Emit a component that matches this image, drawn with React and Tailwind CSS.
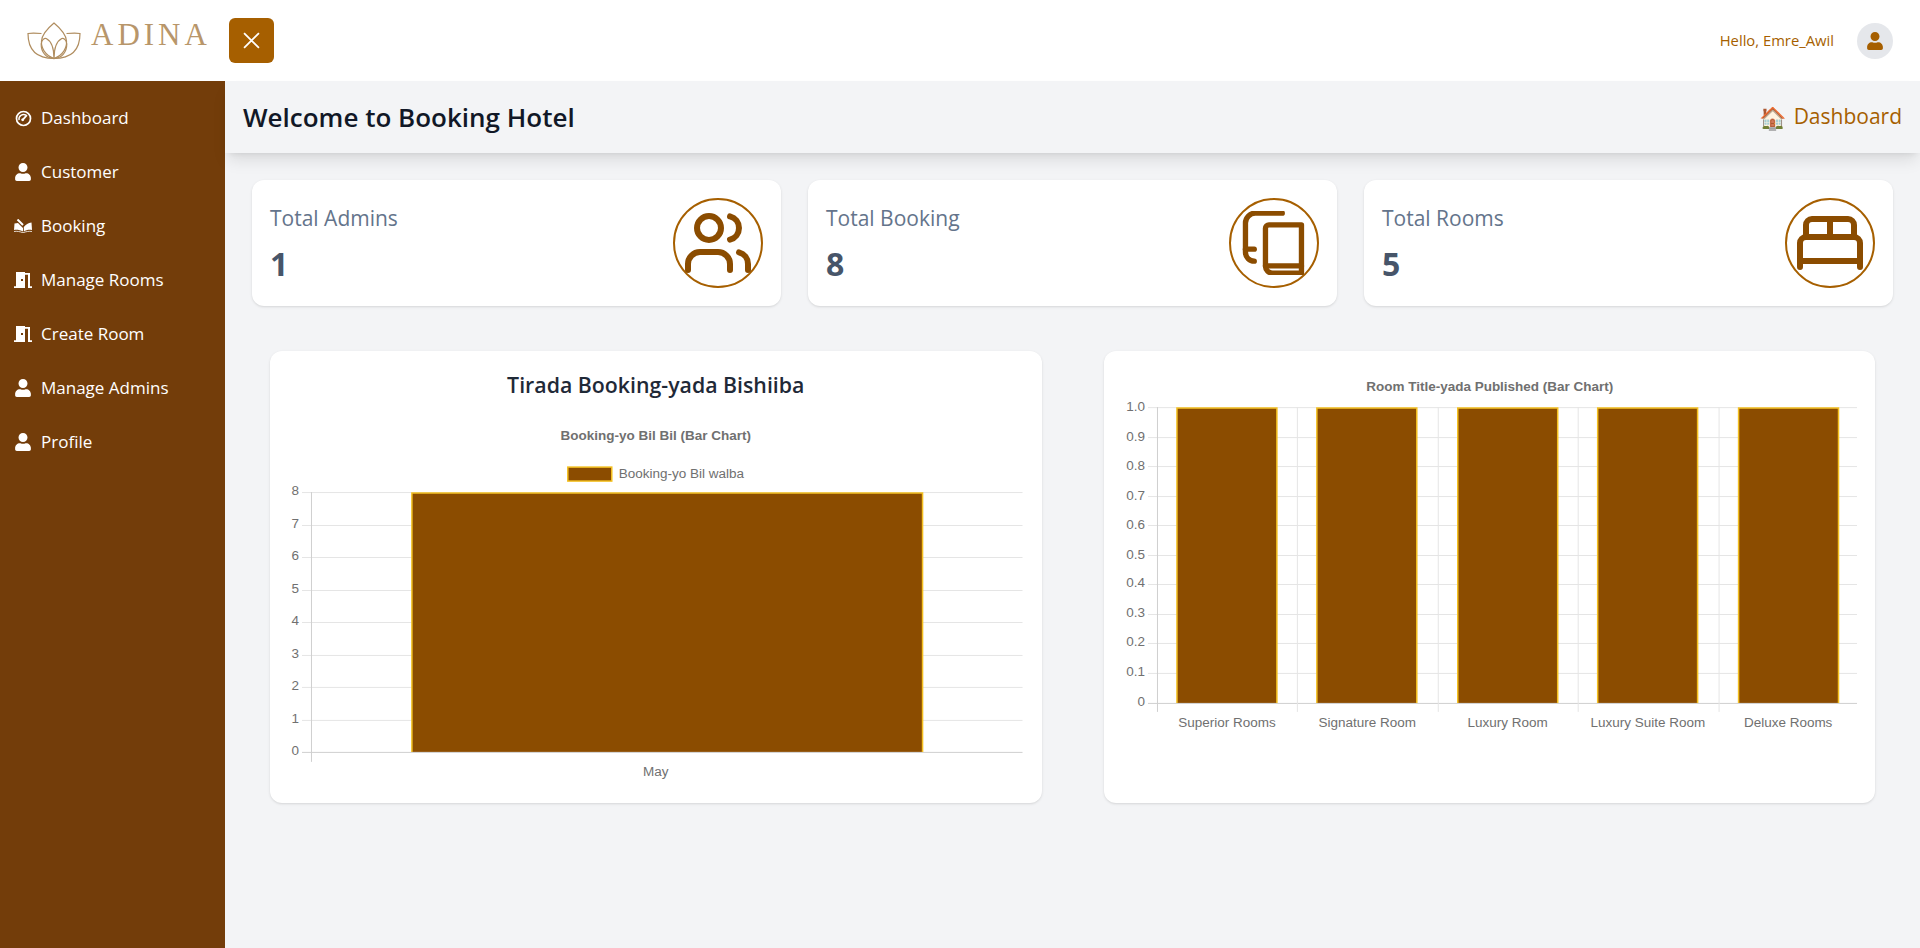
import { Users, BedDouble } from "lucide-react";
import { FaUser } from "react-icons/fa";

const SpeedIcon = () => (
  <svg viewBox="0 0 16 16" width="17" height="17" fill="none" stroke="currentColor">
    <circle cx="8" cy="8" r="6.6" strokeWidth="1.6" />
    <path d="M3.8 9.5a4.4 4.4 0 0 1 6.600-4.600" strokeWidth="1.300" />
    <path d="M7 9.500 11.200 4.800" strokeWidth="1.700" />
    <circle cx="7.200" cy="9.200" r="1.300" fill="currentColor" stroke="none" />
  </svg>
);

const BookIcon = () => (
  <svg viewBox="0 0 18 14" width="18" height="14" fill="currentColor">
    <path d="M0.500 4.500 4 4 9 9V12.500C6 11 3 10.600 0 11Z" />
    <path d="M17.500 3.500 18 11C15 10.600 12 11 9.800 12.500V8C12 5.500 14 4 17.500 3.500Z" />
    <path d="M3.500 0.500 9 6" fill="none" stroke="currentColor" strokeWidth="2" />
    <path d="M0 12.500C3 12 6 12.500 9 13.800 12 12.500 15 12 18 12.500" fill="none" stroke="currentColor" strokeWidth="0.800" />
  </svg>
);

const DoorIcon = () => (
  <svg viewBox="3 3 18 18" width="18" height="16" preserveAspectRatio="none" fill="currentColor">
    <path d="M14 6v15H3v-2h2V3h9v1h5v15h2v2h-4V6h-3zm-4 5v2h2v-2h-2z" />
  </svg>
);

const CopyBookIcon = () => (
  <svg viewBox="0 0 24 24" width="64" height="64" fill="none" stroke="currentColor" strokeWidth="2" strokeLinecap="round" strokeLinejoin="round">
    <path d="M15.100 0.800H5a3.700 3.700 0 0 0-3.700 3.700V15.500a3.300 3.300 0 0 0 3.300 3.300" />
    <path d="M1.300 14.300H4.600" />
    <path d="M8.800 6.500a1.300 1.300 0 0 1 1.300-1.300H22.300V23.300H11.500a2.700 2.700 0 0 1-2.700-2.700Z" />
    <path d="M8.800 20.600H22.300" />
  </svg>
);

const Lotus = () => (
  <svg viewBox="0 0 54 38" width="54" height="38" fill="none" stroke="#b08d5f" strokeWidth="1.200">
    <path d="M27 36.500C18 33 14 26 14.500 19 15 12 21 6 27 1c6 5 12 11 12.500 18 .5 7-3.500 14-12.500 17.500Z" />
    <path d="M27 36.500C19 36 14 30 14.200 22c.2-4 3-6 5-5.500C24 19 27 26 27 36.500Zm0 0c8-.5 12.800-6.500 12.800-14.500-.2-4-3-6-5-5.500C30 19 27 26 27 36.500Z" />
    <path d="M14.500 11.500C9 11 4.500 10.800 1 11.500c0 11 4 25 26 25M39.500 11.500c5.500-.5 10-.7 13.500 0 0 11-4 25-26 25" />
  </svg>
);

const navItems = [
  { label: "Dashboard", icon: <SpeedIcon /> },
  { label: "Customer", icon: <FaUser size={18} /> },
  { label: "Booking", icon: <BookIcon /> },
  { label: "Manage Rooms", icon: <DoorIcon /> },
  { label: "Create Room", icon: <DoorIcon /> },
  { label: "Manage Admins", icon: <FaUser size={18} /> },
  { label: "Profile", icon: <FaUser size={18} /> },
];

const stats = [
  { label: "Total Admins", value: 1, icon: <Users size={72} strokeWidth={2} /> },
  { label: "Total Booking", value: 8, icon: <CopyBookIcon /> },
  { label: "Total Rooms", value: 5, icon: <BedDouble size={72} strokeWidth={2} /> },
];

const GRID = "#e5e5e5";
const AXIS = "#cfcfcf";
const LABEL = "#707070";
const BAR = "#8b4c00";
const BAR_EDGE = "#f4c020";
const CHART_FONT = "'Liberation Sans', Arial, sans-serif";

// fill plus a border on three sides, the bottom edge sits on the axis
const Bar = ({ x, y, w, h }) => (
  <g>
    <rect x={x} y={y} width={w} height={h} fill={BAR} />
    <path d={`M${x} ${y + h}V${y}H${x + w}V${y + h}`} fill="none" stroke={BAR_EDGE} strokeWidth="1.500" />
  </g>
);

const BookingChart = () => {
  const ticks = [91, 124, 156, 189, 221, 254, 286, 319, 351];
  return (
    <svg viewBox="0 0 736 384" className="w-full h-[384px]" fontFamily={CHART_FONT} fontSize="13.500" fill={LABEL}>
      <text x="368" y="39" textAnchor="middle" fontWeight="700">Booking-yo Bil Bil (Bar Chart)</text>
      <rect x="280" y="66" width="44" height="14" fill={BAR} stroke={BAR_EDGE} strokeWidth="1.500" />
      <text x="331" y="77">Booking-yo Bil walba</text>
      {ticks.map((y, i) => (
        <g key={y}>
          <line x1="14" x2="735" y1={y + 0.5} y2={y + 0.5} stroke={i === 8 ? AXIS : GRID} />
          <text x="11" y={y + 3} textAnchor="end">{8 - i}</text>
        </g>
      ))}
      <line x1="23.500" x2="23.500" y1="91" y2="361" stroke={AXIS} />
      <Bar x={124} y={92} w={511} h={259} />
      <text x="368" y="375" textAnchor="middle">May</text>
    </svg>
  );
};

const RoomsChart = () => {
  const rows = ["1.0", "0.9", "0.8", "0.7", "0.6", "0.5", "0.4", "0.3", "0.2", "0.1", "0"];
  const rooms = ["Superior Rooms", "Signature Room", "Luxury Room", "Luxury Suite Room", "Deluxe Rooms"];
  return (
    <svg viewBox="0 0 736 416" className="w-full h-[416px]" fontFamily={CHART_FONT} fontSize="13.500" fill={LABEL}>
      <text x="368" y="22" textAnchor="middle" fontWeight="700">Room Title-yada Published (Bar Chart)</text>
      {rows.map((t, i) => {
        const y = Math.round(38 + i * 29.56) + 0.5;
        return (
          <g key={t}>
            <line x1="26" x2="736" y1={y} y2={y} stroke={i === 10 ? AXIS : GRID} />
            <text x="23" y={y + 3} textAnchor="end">{t}</text>
          </g>
        );
      })}
      {[0, 1, 2, 3, 4, 5].map((i) => {
        const x = Math.round(35 + i * 140.4) + 0.5;
        return <line key={i} x1={x} x2={x} y1="38" y2="343" stroke={i === 0 ? AXIS : GRID} />;
      })}
      {rooms.map((room, i) => (
        <g key={room}>
          <Bar x={Math.round(55 + i * 140.4)} y={39} w={100} h={295} />
          <text x={105 + i * 140.4} y="358" textAnchor="middle">{room}</text>
        </g>
      ))}
    </svg>
  );
};

const App = () => {
  return (
    <div className="min-h-[948px] bg-[#f3f4f6] font-['Open_Sans','Noto_Sans',sans-serif]">
      <header className="h-[81px] bg-white flex items-center justify-between pl-[27px] pr-[27px]">
        <div className="flex items-center">
          <Lotus />
          <span className="ml-[10px] -mt-[13px] font-['Liberation_Serif',serif] text-[31px] leading-none tracking-[4px] text-[#b8966a]">ADINA</span>
          <button className="ml-[18px] w-[45px] h-[45px] rounded-md bg-[#a65f00] flex items-center justify-center text-white">
            <svg viewBox="0 0 16 16" width="17" height="17" fill="none" stroke="currentColor" strokeWidth="1.700"><path d="M1 1l14 14M15 1 1 15" /></svg>
          </button>
        </div>
        <div className="flex items-center gap-[23px]">
          <span className="text-[14.800px] text-[#a65f00]">Hello, Emre_Awil</span>
          <span className="w-9 h-9 rounded-full bg-[#e5e7eb] flex items-center justify-center text-[#a65f00]"><FaUser size={18} /></span>
        </div>
      </header>
      <div className="flex">
        <aside className="w-[225px] h-[867px] shrink-0 bg-[#733d0a] text-white pt-[10px]">
          {navItems.map((item) => (
            <div key={item.label} className="h-[54px] flex items-center pl-[14px] text-[17px]">
              <span className="w-[18px] flex justify-center">{item.icon}</span>
              <span className="ml-[9px]">{item.label}</span>
            </div>
          ))}
        </aside>
        <main className="flex-1 min-w-0">
          <div className="relative h-[72px] bg-[#f3f4f6] flex items-center justify-between pl-[18px] pr-[18px] shadow-lg">
            <h1 className="text-[26px] font-semibold text-[#111827]">Welcome to Booking Hotel</h1>
            <span className="flex items-center gap-[8px] text-[21px] text-[#a65f00]">
              <span className="text-[22px] leading-none">🏠</span>
              Dashboard
            </span>
          </div>
          <div className="px-[27px] pt-[27px] grid grid-cols-3 gap-[27px]">
            {stats.map((s) => (
              <div key={s.label} className="h-[126px] bg-white rounded-xl shadow-sm flex items-center justify-between pl-[18px] pr-[18px]">
                <div>
                  <p className="text-[21px] leading-[28px] text-[#64748b]">{s.label}</p>
                  <p className="mt-[14px] text-[32px] leading-[36px] font-bold text-[#475569]">{s.value}</p>
                </div>
                <div className="w-[90px] h-[90px] rounded-full border-2 border-[#a65f00] text-[#8b4c00] flex items-center justify-center">{s.icon}</div>
              </div>
            ))}
          </div>
          <div className="px-[45px] pt-[45px] grid grid-cols-2 gap-[62px]">
            <section className="h-[452px] bg-white rounded-xl shadow-sm p-[18px]">
              <h2 className="h-[32px] text-center text-[21.300px] leading-[32px] font-semibold text-[#1f2937]">Tirada Booking-yada Bishiiba</h2>
              <BookingChart />
            </section>
            <section className="h-[452px] bg-white rounded-xl shadow-sm p-[18px]">
              <RoomsChart />
            </section>
          </div>
        </main>
      </div>
    </div>
  );
};

export default App;
